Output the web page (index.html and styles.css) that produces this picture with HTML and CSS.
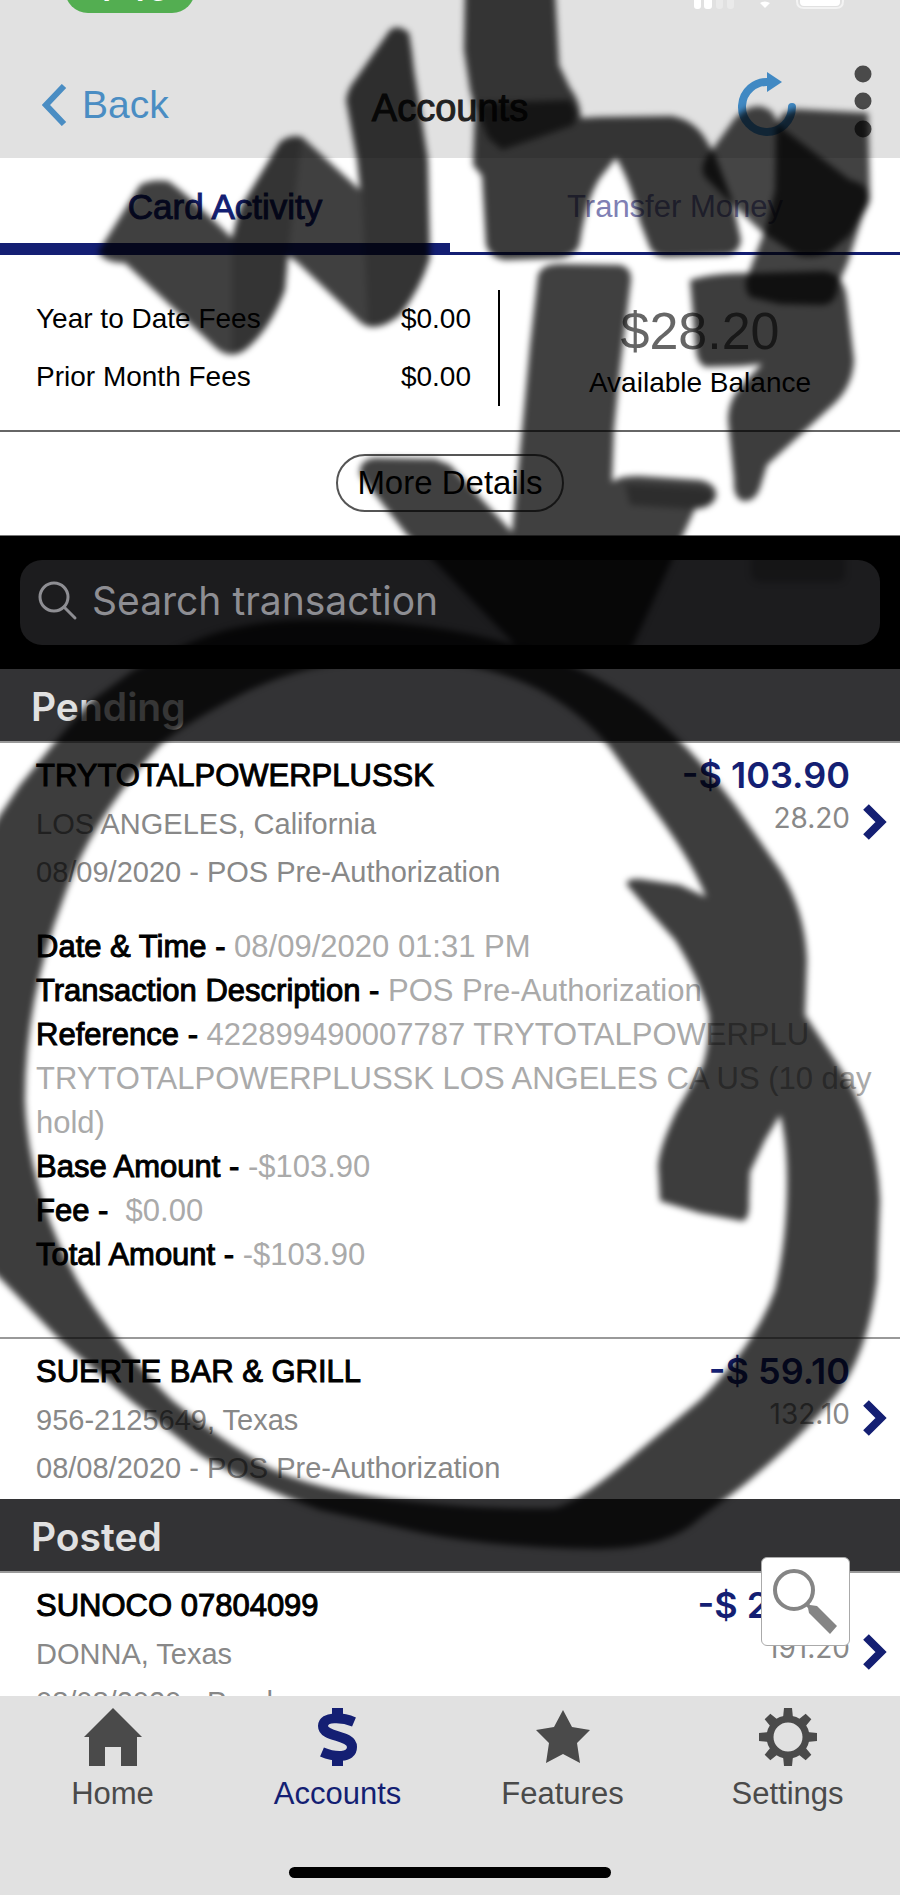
FILE: index.html
```html
<!DOCTYPE html>
<html lang="en">
<head>
    <meta charset="UTF-8">
    <meta name="viewport" content="width=device-width, initial-scale=1.0">
    <title>Accounts</title>
    <link rel="stylesheet" href="styles.css">
</head>
<body>
    <div class="app">
        <header class="header">
            <div class="status-bar">
                <span class="status-time">4:46</span>
                <svg class="status-icons" width="156" height="9" viewBox="0 0 156 9" fill="#fff">
                    <path d="M4 0h7v6q0 3-3 3H7q-3 0-3-3zM14 0h8v6q0 3-3 3h-2q-3 0-3-3z"/>
                    <path d="M26 0h7v6q0 3-3 3h-1q-3 0-3-3zM37 0h7v6q0 3-3 3h-1q-3 0-3-3z" opacity=".3"/>
                    <path d="M70 3q5-3 10 0l-5 5z"/>
                    <path d="M110 0h40v2q0 4-4 4h-32q-4 0-4-4z"/>
                    <path d="M107 0v1q0 7 7 7h32q7 0 7-7V0" fill="none" stroke="#fff" stroke-width="2" opacity=".6"/>
                </svg>
            </div>
            <div class="nav-bar">
                <a href="#" class="back">
                    <svg width="26" height="42" viewBox="0 0 26 42" fill="none" stroke="#4a8dc3" stroke-width="6"><path d="M22 2L4 21l18 19"/></svg>
                    Back
                </a>
                <h1>Accounts</h1>
                <div class="nav-actions">
                    <button type="button" aria-label="Refresh">
                        <svg width="60" height="68" viewBox="0 0 60 68">
                            <path d="M32 11A25 25 0 1 0 55 36" fill="none" stroke="#4189c3" stroke-width="8" stroke-linecap="round"/>
                            <path d="M30 1l15 10-15 10z" fill="#4189c3"/>
                        </svg>
                    </button>
                    <button type="button" aria-label="More options">
                        <svg width="18" height="80" viewBox="0 0 18 80" fill="#4a4a4a"><circle cx="9" cy="9" r="8.5"/><circle cx="9" cy="36" r="8.5"/><circle cx="9" cy="64" r="8.5"/></svg>
                    </button>
                </div>
            </div>
        </header>

        <nav class="tabs">
            <a href="#" class="active">Card Activity</a>
            <a href="#">Transfer Money</a>
        </nav>

        <section class="summary">
            <div class="fees">
                <div class="fee-row"><span>Year to Date Fees</span><span>$0.00</span></div>
                <div class="fee-row"><span>Prior Month Fees</span><span>$0.00</span></div>
            </div>
            <div class="balance">
                <strong>$28.20</strong>
                <span>Available Balance</span>
            </div>
        </section>
        <div class="more">
            <button type="button">More Details</button>
        </div>

        <div class="search">
            <label class="search-field">
                <svg width="40" height="40" viewBox="0 0 40 40" fill="none" stroke="#8e8e93" stroke-width="3" stroke-linecap="round"><circle cx="16" cy="16" r="14"/><path d="M26 26l11 11"/></svg>
                <input type="text" placeholder="Search transaction" aria-label="Search transaction">
            </label>
        </div>

        <main class="transactions">
            <h2>Pending</h2>
            <article class="transaction">
                <div class="info">
                    <h3>TRYTOTALPOWERPLUSSK</h3>
                    <p>LOS ANGELES, California</p>
                    <p>08/09/2020 - POS Pre-Authorization</p>
                </div>
                <div class="amount">
                    <b>-$ 103.90</b>
                    <span>28.20</span>
                </div>
                <svg class="chevron" width="26" height="38" viewBox="0 0 26 38" fill="none" stroke="#141f73" stroke-width="8"><path d="M4 4l15 15L4 34"/></svg>
            </article>
            <div class="details">
                <p><b>Date &amp; Time -</b> 08/09/2020 01:31 PM</p>
                <p><b>Transaction Description -</b> POS Pre-Authorization</p>
                <p><b>Reference -</b> 422899490007787 TRYTOTALPOWERPLU TRYTOTALPOWERPLUSSK LOS ANGELES CA US (10 day hold)</p>
                <p><b>Base Amount -</b> -$103.90</p>
                <p><b>Fee -</b> &nbsp;$0.00</p>
                <p><b>Total Amount -</b> -$103.90</p>
            </div>
            <article class="transaction">
                <div class="info">
                    <h3>SUERTE BAR &amp; GRILL</h3>
                    <p>956-2125649, Texas</p>
                    <p>08/08/2020 - POS Pre-Authorization</p>
                </div>
                <div class="amount">
                    <b>-$ 59.10</b>
                    <span>132.10</span>
                </div>
                <svg class="chevron" width="26" height="38" viewBox="0 0 26 38" fill="none" stroke="#141f73" stroke-width="8"><path d="M4 4l15 15L4 34"/></svg>
            </article>
            <h2>Posted</h2>
            <article class="transaction">
                <div class="info">
                    <h3>SUNOCO 07804099</h3>
                    <p>DONNA, Texas</p>
                    <p>08/08/2020 - Purchase</p>
                </div>
                <div class="amount">
                    <b>-$ 20.00</b>
                    <span>191.20</span>
                </div>
                <svg class="chevron" width="26" height="38" viewBox="0 0 26 38" fill="none" stroke="#141f73" stroke-width="8"><path d="M4 4l15 15L4 34"/></svg>
            </article>
            <button type="button" class="find" aria-label="Find">
                <svg width="66" height="66" viewBox="0 0 66 66"><circle cx="21" cy="21" r="19" fill="none" stroke="#858585" stroke-width="4"/><path d="M32 36l3-3 2 3 7 1 20 20-7 8-21-21-1-5z" fill="#858585"/></svg>
            </button>
        </main>

        <footer class="tab-bar">
            <nav>
                <a href="#">
                    <svg width="58" height="58" viewBox="0 0 58 58" fill="#4a4a4a"><path d="M29 0l29 29h-5v29H37V39H21v19H5V29H0z"/></svg>
                    Home
                </a>
                <a href="#" class="active">
                    <svg width="42" height="58" viewBox="0 0 42 58">
                        <path d="M37 14C25 9 6 8 6 18c0 12 29 8 29 21 0 12-18 10-30 5" fill="none" stroke="#141f73" stroke-width="10"/>
                        <path d="M15 0h11v9H15zM15 49h11v9H15z" fill="#141f73"/>
                    </svg>
                    Accounts
                </a>
                <a href="#">
                    <svg width="58" height="58" viewBox="0 0 58 58" fill="#4a4a4a"><path d="M29 2l9 17 18 3-13 13 3 20-17-9-17 9 3-20L2 22l18-3z"/></svg>
                    Features
                </a>
                <a href="#">
                    <svg width="58" height="58" viewBox="0 0 58 58" fill="#4a4a4a">
                        <circle cx="29" cy="29" r="18" fill="none" stroke="#4a4a4a" stroke-width="7"/>
                        <g id="teeth"><path d="M25 0h8l1 10H24zM25 58h8l1-10H24zM0 25v8l10 1V24zM58 25v8l-10 1V24z"/></g>
                        <use href="#teeth" transform="rotate(45 29 29)"/>
                    </svg>
                    Settings
                </a>
            </nav>
            <div class="home-indicator"></div>
        </footer>

        <!-- marker drawn over the screen -->
        <svg class="marker" viewBox="0 0 900 1895" aria-hidden="true">
            <defs>
                <filter id="soft" x="-5%" y="-5%" width="110%" height="110%"><feGaussianBlur stdDeviation="3"/></filter>
            </defs>
            <g filter="url(#soft)">
                <path opacity=".75" d="M98 252L140 185Q150 179 168 181Q185 192 232 238L240 208L280 142Q290 134 302 137L360 190L357 160L346 100Q348 88 355 80L390 30Q398 24 409 33Q412 50 414 70L428 160L430 258Q420 290 400 315Q375 335 360 322L297 262L288 256L285 290Q270 330 245 350Q230 360 216 348L125 263Q105 263 98 252z"/>
                <path opacity=".2" d="M232 238L240 208L280 142Q290 134 302 137L288 256L285 290Q270 330 245 350L232 355z"/>
                <path opacity=".2" d="M362 190L357 160L346 100Q348 88 355 80L390 30Q398 24 409 33Q412 50 414 70L428 160L430 258Q420 290 400 315Q385 328 368 326z"/>
                <path opacity=".77" d="M465-10L464 50L470 90L475 110L473 165L482 176L486 245Q490 258 505 260L560 258Q578 255 580 242Q586 200 600 178L616 158Q630 180 640 222L650 248Q655 258 670 257L728 255Q740 252 741 240L732 200L715 155L703 135Q692 120 672 116L600 117L581 118Q580 100 570 88L559 65L555-10z"/>
                <path opacity=".6" d="M474 103L570 100L577 112L574 125L540 137L502 150L488 138z"/>
                <path opacity=".73" d="M712 150L735 118Q755 98 772 112L782 128L850 180Q868 184 868 195L868 205L850 235L830 252Q810 260 795 254L762 232L728 200L705 177Q698 165 712 150z"/>
                <path opacity=".74" d="M782 114L795 109L868 113L870 200L862 218L848 262L838 285Q837 304 822 305L780 304L750 297Q744 288 746 280L765 230L775 190L776 128z"/>
                <path opacity=".76" d="M690 280Q715 272 760 273L825 271Q845 275 847 300L854 360Q853 385 835 403L800 435L767 465L760 488Q755 502 743 501Q733 498 734 480L728 420Q728 400 742 385L762 364L740 366L705 367Q697 363 696 350z"/>
                <path opacity=".75" d="M538 275Q542 264 560 264L620 265Q632 268 631 280L620 370L614 430L612 482Q620 475 640 476L700 480Q718 484 716 497Q712 508 695 509L683 535L672 560L630 652L522 652L433 560L407 535L360 475Q358 460 375 458L435 459L450 465L512 532L522 430L530 345z"/>
                <path opacity=".3" d="M625 484L700 488Q716 490 712 500Q708 508 690 509L630 505z"/>
                <path opacity=".25" d="M751 555H845V574Q845 582 835 582H760Q751 580 751 574z"/>
                <path opacity=".76" fill-rule="evenodd" d="M-20 850L0 815L20 785L55 742L90 702L135 669L185 645Q240 619 310 620Q420 618 515 645Q590 668 640 705Q690 745 735 805L780 870Q805 910 807 960L805 1015L835 1060Q877 1120 880 1200L877 1280Q868 1350 840 1390Q800 1440 740 1488L700 1518Q670 1548 600 1549Q480 1548 400 1528L320 1510Q240 1480 200 1455L130 1400L60 1340L0 1278L-20 1260zM63 900Q25 1000 25 1100Q28 1190 77 1280Q115 1345 172 1400Q220 1440 270 1468Q310 1488 390 1499Q480 1510 555 1508Q580 1502 640 1450L700 1400Q755 1345 775 1290Q787 1240 787 1180Q787 1140 780 1115L765 1140L750 1172L749 1200Q750 1220 742 1221L700 1213L660 1201L658 1165Q660 1145 677 1110L703 1065Q710 1040 709 1015Q700 980 675 940L650 912L627 885Q625 878 640 879L680 885L706 897Q695 868 665 825L615 755Q590 718 540 690Q470 655 380 660Q310 662 250 690Q190 720 161 744Q90 820 63 900z"/>
            </g>
        </svg>
    </div>
</body>
</html>
```
FILE: styles.css
```css
* {
    box-sizing: border-box;
}
body {
    margin: 0;
    font-family: "Liberation Sans", Arial, sans-serif;
    font-size: 29px;
    color: #000;
    background-color: #fff;
}
a {
    color: inherit;
    text-decoration: none;
}
button {
    font-family: inherit;
    padding: 0;
    border: none;
    background: none;
    cursor: pointer;
}
svg {
    display: block;
    flex: none;
}
.app {
    position: relative;
    display: flex;
    flex-direction: column;
    height: 100vh;
    overflow: hidden;
}

/* header */
.header {
    background-color: #e1e1e1;
}
.status-bar {
    display: flex;
    justify-content: space-between;
    align-items: flex-start;
    height: 52px;
    padding: 0 54px 0 65px;
}
.status-time {
    width: 130px;
    height: 46px;
    margin-top: -33px;
    border-radius: 23px;
    line-height: 44px;
    text-align: center;
    font-family: Inter, sans-serif;
    font-size: 34px;
    font-weight: 600;
    color: #fff;
    background-color: #53ae51;
}
.nav-bar {
    display: grid;
    grid-template-columns: 1fr auto 1fr;
    align-items: center;
    height: 106px;
    padding: 0 28px;
}
.back {
    display: flex;
    align-items: center;
    gap: 14px;
    padding-left: 14px;
    font-size: 39px;
    color: #4a8dc3;
}
h1 {
    margin: 6px 0 0;
    font-size: 38px;
    font-weight: normal;
    color: #222;
    -webkit-text-stroke: 1px;
}
.nav-actions {
    display: flex;
    justify-content: flex-end;
    align-items: center;
    gap: 57px;
}

/* tabs */
.tabs {
    display: grid;
    grid-template-columns: 1fr 1fr;
    height: 97px;
    line-height: 66px;
    border-bottom: 3px solid #141f73;
    text-align: center;
    font-size: 31px;
    color: #8080b4;
}
.tabs a {
    padding-top: 16px;
}
.tabs .active {
    border-bottom: 9px solid #141f73;
    font-size: 35px;
    color: #141f73;
    -webkit-text-stroke: 1px;
}

/* balance summary */
.summary {
    display: grid;
    grid-template-columns: 5fr 4fr;
    padding: 35px 0 24px;
    border-bottom: 2px solid #666;
    font-size: 28px;
}
.fees {
    border-right: 2px solid #000;
    padding: 0 27px 0 36px;
}
.fee-row {
    display: flex;
    justify-content: space-between;
    line-height: 58px;
}
.balance {
    display: flex;
    flex-direction: column;
    align-items: center;
    padding-top: 10px;
}
.balance strong {
    font-size: 52px;
    line-height: 62px;
    font-weight: normal;
    color: #666;
}
.balance span {
    line-height: 42px;
}
.more {
    display: flex;
    justify-content: center;
    padding: 22px 0 23px;
}
.more button {
    height: 58px;
    padding: 0 19px;
    border: 2px solid #555;
    border-radius: 29px;
    font-size: 33px;
    color: #000;
}

/* search */
.search {
    padding: 24px 20px;
    background-color: #000;
    border-top: 1px solid #777;
}
.search-field {
    display: flex;
    align-items: center;
    gap: 14px;
    height: 85px;
    padding: 0 18px 4px;
    border-radius: 22px;
    background-color: #1c1c1e;
}
.search-field input {
    flex: 1;
    min-width: 0;
    padding: 0;
    border: none;
    outline: none;
    background: none;
    font-family: Inter, sans-serif;
    font-size: 39px;
    color: #fff;
}
.search-field input::placeholder {
    color: #8e8e93;
    opacity: 1;
}

/* transactions */
.transactions {
    position: relative;
    flex: 1;
    min-height: 0;
    overflow: hidden;
}
h2 {
    margin: 0;
    height: 74px;
    padding-left: 31px;
    line-height: 76px;
    border-bottom: 2px solid #999;
    font-family: Inter, sans-serif;
    font-size: 39px;
    font-weight: 600;
    color: #e1e1e1;
    background-color: #333335;
}
.transaction {
    display: flex;
    align-items: flex-start;
    height: 160px;
    padding: 8px 12px 0 36px;
}
.info {
    flex: 1;
}
.info h3 {
    margin: 0;
    font-size: 31px;
    line-height: 49px;
    font-weight: normal;
    -webkit-text-stroke: 1px;
}
.info p {
    margin: 0;
    line-height: 48px;
    color: #888;
}
.amount {
    display: flex;
    flex-direction: column;
    align-items: flex-end;
    font-family: Inter, sans-serif;
}
.amount b {
    font-size: 36px;
    line-height: 48px;
    font-weight: 600;
    color: #141f73;
}
.amount span {
    font-size: 28px;
    line-height: 38px;
    color: #888;
}
.chevron {
    margin: 52px 0 0 12px;
}
.details {
    padding: 22px 24px 60px 36px;
    border-bottom: 2px solid #999;
    font-size: 31px;
    line-height: 44px;
    color: #aaa;
}
.details p {
    margin: 0;
}
.details b {
    font-weight: normal;
    color: #000;
    -webkit-text-stroke: 1px;
}
.find {
    position: absolute;
    right: 50px;
    bottom: 50px;
    display: grid;
    place-items: center;
    width: 89px;
    height: 89px;
    border: 1px solid #aaa;
    border-radius: 6px;
    background-color: #fff;
}

/* bottom bar */
.tab-bar {
    height: 199px;
    padding-top: 12px;
    background-color: #e1e1e1;
}
.tab-bar nav {
    display: grid;
    grid-template-columns: repeat(4, 1fr);
    height: 159px;
}
.tab-bar a {
    display: flex;
    flex-direction: column;
    align-items: center;
    gap: 8px;
    font-size: 31px;
    line-height: 40px;
    color: #4a4a4a;
}
.tab-bar .active {
    color: #141f73;
}
.home-indicator {
    width: 322px;
    height: 11px;
    margin: 0 auto;
    border-radius: 6px;
    background-color: #000;
}

.marker {
    position: absolute;
    top: 0;
    left: 0;
    width: 100%;
    pointer-events: none;
}
```
